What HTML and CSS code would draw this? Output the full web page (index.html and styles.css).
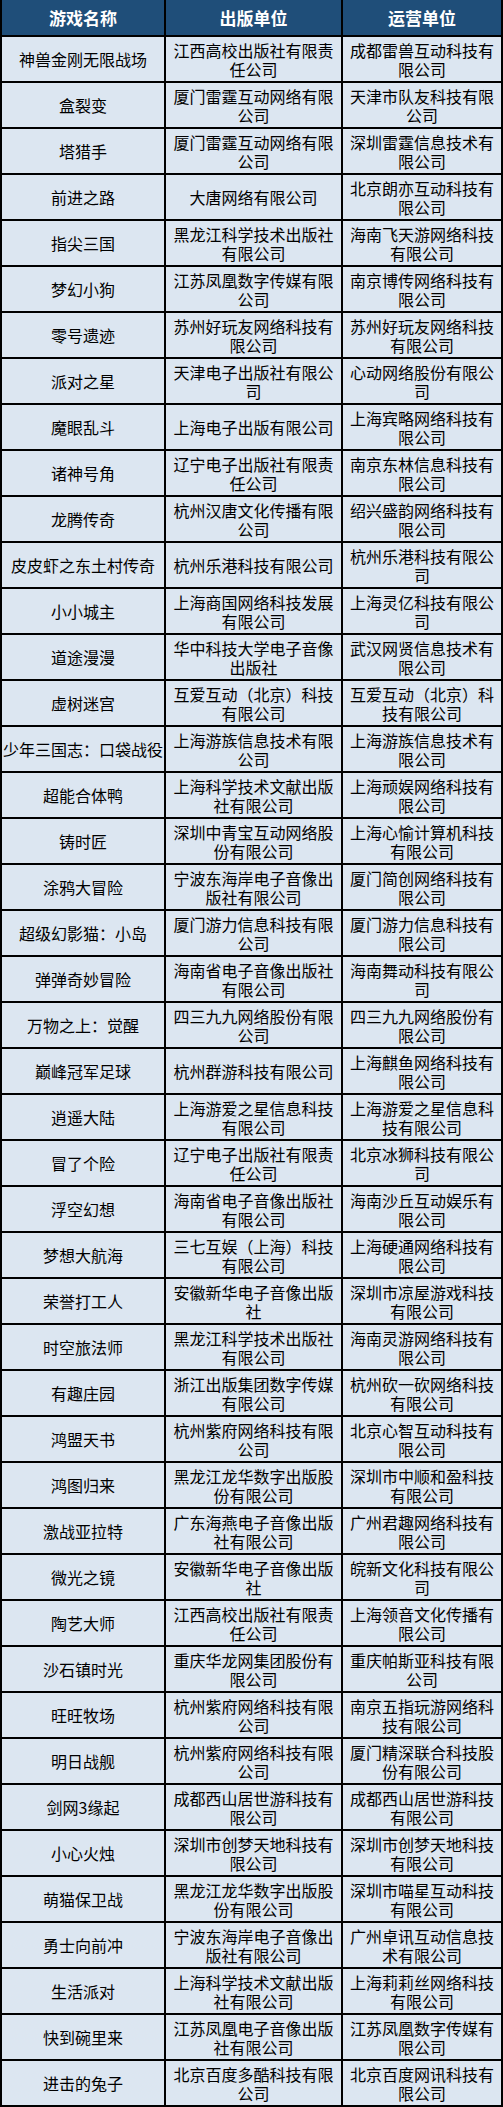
FILE: index.html
```html
<!DOCTYPE html>
<html lang="zh-CN">
<head>
<meta charset="utf-8">
<title>游戏名单</title>
<link rel="stylesheet" href="styles.css">
</head>
<body>
<div class="table" role="table">
  <div class="cell head">游戏名称</div><div class="cell head">出版单位</div><div class="cell head">运营单位</div>
  <div class="cell">神兽金刚无限战场</div><div class="cell">江西高校出版社有限责任公司</div><div class="cell">成都雷兽互动科技有限公司</div>
  <div class="cell">盒裂变</div><div class="cell">厦门雷霆互动网络有限公司</div><div class="cell">天津市队友科技有限公司</div>
  <div class="cell">塔猎手</div><div class="cell">厦门雷霆互动网络有限公司</div><div class="cell">深圳雷霆信息技术有限公司</div>
  <div class="cell">前进之路</div><div class="cell">大唐网络有限公司</div><div class="cell">北京朗亦互动科技有限公司</div>
  <div class="cell">指尖三国</div><div class="cell">黑龙江科学技术出版社有限公司</div><div class="cell">海南飞天游网络科技有限公司</div>
  <div class="cell">梦幻小狗</div><div class="cell">江苏凤凰数字传媒有限公司</div><div class="cell">南京博传网络科技有限公司</div>
  <div class="cell">零号遗迹</div><div class="cell">苏州好玩友网络科技有限公司</div><div class="cell">苏州好玩友网络科技有限公司</div>
  <div class="cell">派对之星</div><div class="cell">天津电子出版社有限公司</div><div class="cell">心动网络股份有限公司</div>
  <div class="cell">魔眼乱斗</div><div class="cell">上海电子出版有限公司</div><div class="cell">上海宾略网络科技有限公司</div>
  <div class="cell">诸神号角</div><div class="cell">辽宁电子出版社有限责任公司</div><div class="cell">南京东林信息科技有限公司</div>
  <div class="cell">龙腾传奇</div><div class="cell">杭州汉唐文化传播有限公司</div><div class="cell">绍兴盛韵网络科技有限公司</div>
  <div class="cell">皮皮虾之东土村传奇</div><div class="cell">杭州乐港科技有限公司</div><div class="cell">杭州乐港科技有限公司</div>
  <div class="cell">小小城主</div><div class="cell">上海商国网络科技发展有限公司</div><div class="cell">上海灵亿科技有限公司</div>
  <div class="cell">道途漫漫</div><div class="cell">华中科技大学电子音像出版社</div><div class="cell">武汉网贤信息技术有限公司</div>
  <div class="cell">虚树迷宫</div><div class="cell">互爱互动（北京）科技有限公司</div><div class="cell">互爱互动（北京）科技有限公司</div>
  <div class="cell">少年三国志：口袋战役</div><div class="cell">上海游族信息技术有限公司</div><div class="cell">上海游族信息技术有限公司</div>
  <div class="cell">超能合体鸭</div><div class="cell">上海科学技术文献出版社有限公司</div><div class="cell">上海顽娱网络科技有限公司</div>
  <div class="cell">铸时匠</div><div class="cell">深圳中青宝互动网络股份有限公司</div><div class="cell">上海心愉计算机科技有限公司</div>
  <div class="cell">涂鸦大冒险</div><div class="cell">宁波东海岸电子音像出版社有限公司</div><div class="cell">厦门简创网络科技有限公司</div>
  <div class="cell">超级幻影猫：小岛</div><div class="cell">厦门游力信息科技有限公司</div><div class="cell">厦门游力信息科技有限公司</div>
  <div class="cell">弹弹奇妙冒险</div><div class="cell">海南省电子音像出版社有限公司</div><div class="cell">海南舞动科技有限公司</div>
  <div class="cell">万物之上：觉醒</div><div class="cell">四三九九网络股份有限公司</div><div class="cell">四三九九网络股份有限公司</div>
  <div class="cell">巅峰冠军足球</div><div class="cell">杭州群游科技有限公司</div><div class="cell">上海麒鱼网络科技有限公司</div>
  <div class="cell">逍遥大陆</div><div class="cell">上海游爱之星信息科技有限公司</div><div class="cell">上海游爱之星信息科技有限公司</div>
  <div class="cell">冒了个险</div><div class="cell">辽宁电子出版社有限责任公司</div><div class="cell">北京冰狮科技有限公司</div>
  <div class="cell">浮空幻想</div><div class="cell">海南省电子音像出版社有限公司</div><div class="cell">海南沙丘互动娱乐有限公司</div>
  <div class="cell">梦想大航海</div><div class="cell">三七互娱（上海）科技有限公司</div><div class="cell">上海硬通网络科技有限公司</div>
  <div class="cell">荣誉打工人</div><div class="cell">安徽新华电子音像出版社</div><div class="cell">深圳市凉屋游戏科技有限公司</div>
  <div class="cell">时空旅法师</div><div class="cell">黑龙江科学技术出版社有限公司</div><div class="cell">海南灵游网络科技有限公司</div>
  <div class="cell">有趣庄园</div><div class="cell">浙江出版集团数字传媒有限公司</div><div class="cell">杭州砍一砍网络科技有限公司</div>
  <div class="cell">鸿盟天书</div><div class="cell">杭州紫府网络科技有限公司</div><div class="cell">北京心智互动科技有限公司</div>
  <div class="cell">鸿图归来</div><div class="cell">黑龙江龙华数字出版股份有限公司</div><div class="cell">深圳市中顺和盈科技有限公司</div>
  <div class="cell">激战亚拉特</div><div class="cell">广东海燕电子音像出版社有限公司</div><div class="cell">广州君趣网络科技有限公司</div>
  <div class="cell">微光之镜</div><div class="cell">安徽新华电子音像出版社</div><div class="cell">皖新文化科技有限公司</div>
  <div class="cell">陶艺大师</div><div class="cell">江西高校出版社有限责任公司</div><div class="cell">上海领音文化传播有限公司</div>
  <div class="cell">沙石镇时光</div><div class="cell">重庆华龙网集团股份有限公司</div><div class="cell">重庆帕斯亚科技有限公司</div>
  <div class="cell">旺旺牧场</div><div class="cell">杭州紫府网络科技有限公司</div><div class="cell">南京五指玩游网络科技有限公司</div>
  <div class="cell">明日战舰</div><div class="cell">杭州紫府网络科技有限公司</div><div class="cell">厦门精深联合科技股份有限公司</div>
  <div class="cell">剑网3缘起</div><div class="cell">成都西山居世游科技有限公司</div><div class="cell">成都西山居世游科技有限公司</div>
  <div class="cell">小心火烛</div><div class="cell">深圳市创梦天地科技有限公司</div><div class="cell">深圳市创梦天地科技有限公司</div>
  <div class="cell">萌猫保卫战</div><div class="cell">黑龙江龙华数字出版股份有限公司</div><div class="cell">深圳市喵星互动科技有限公司</div>
  <div class="cell">勇士向前冲</div><div class="cell">宁波东海岸电子音像出版社有限公司</div><div class="cell">广州卓讯互动信息技术有限公司</div>
  <div class="cell">生活派对</div><div class="cell">上海科学技术文献出版社有限公司</div><div class="cell">上海莉莉丝网络科技有限公司</div>
  <div class="cell">快到碗里来</div><div class="cell">江苏凤凰电子音像出版社有限公司</div><div class="cell">江苏凤凰数字传媒有限公司</div>
  <div class="cell">进击的兔子</div><div class="cell">北京百度多酷科技有限公司</div><div class="cell">北京百度网讯科技有限公司</div>
</div>
</body>
</html>
```
FILE: styles.css
```css
html, body {
  margin: 0;
  padding: 0;
  background: #ffffff;
}

.table {
  width: 503px;
  box-sizing: border-box;
  display: grid;
  grid-template-columns: 162px 175px 158px;
  grid-template-rows: 35px;
  grid-auto-rows: 44px;
  gap: 2px;
  padding: 0 2px 2px 2px;
  background: #000000;
  font-family: "Noto Sans CJK SC", "Noto Sans", sans-serif;
  font-size: 16px;
  line-height: 19px;
  color: #000000;
}

.cell {
  display: flex;
  align-items: center;
  justify-content: center;
  text-align: center;
  background: #dce6f1;
  padding: 1px 0 0 0;
  overflow: hidden;
}

.head {
  background: #1f4e79;
  color: #ffffff;
  font-size: 17px;
  font-weight: bold;
  padding: 0;
}
```
